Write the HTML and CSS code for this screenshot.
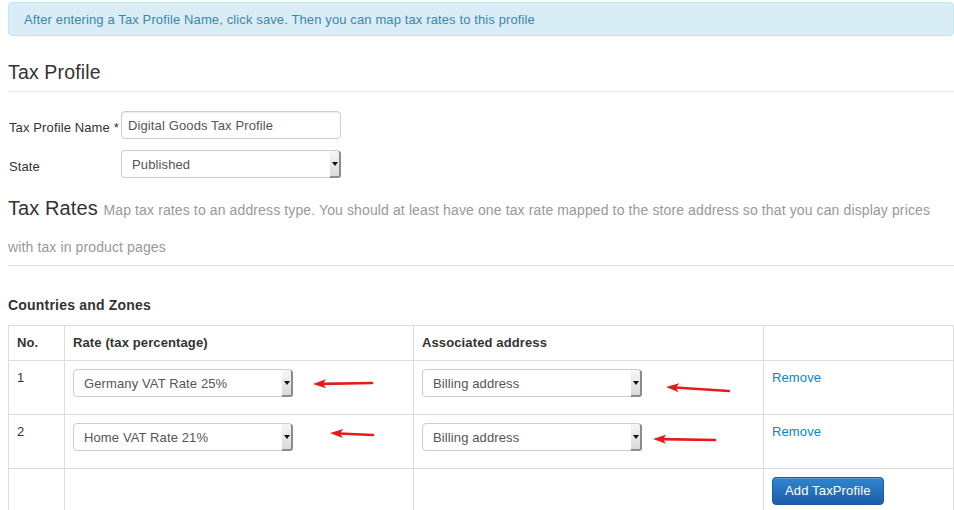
FILE: index.html
```html
<!DOCTYPE html>
<html>
<head>
<meta charset="utf-8">
<title>Tax Profile</title>
<link rel="stylesheet" href="styles.css">
</head>
<body>
<div class="page">
  <div class="alert">After entering a Tax Profile Name, click save. Then you can map tax rates to this profile</div>

  <h3 class="section-title">Tax Profile</h3>
  <hr class="rule rule-profile">

  <div class="form">
    <div class="form-row">
      <label class="control-label">Tax Profile Name *</label>
      <input class="text-input" type="text" value="Digital Goods Tax Profile">
    </div>
    <div class="form-row">
      <label class="control-label">State</label>
      <div class="select"><span class="select-value">Published</span><span class="select-drop"></span></div>
    </div>
  </div>

  <h3 class="rates-title">Tax Rates <small class="muted">Map tax rates to an address type. You should at least have one tax rate mapped to the store address so that you can display prices with tax in product pages</small></h3>
  <hr class="rule rule-rates">

  <h4 class="zones-title">Countries and Zones</h4>

  <table class="rates-table">
    <colgroup>
      <col class="col-no">
      <col class="col-rate">
      <col class="col-addr">
      <col class="col-action">
    </colgroup>
    <thead>
      <tr>
        <th>No.</th>
        <th>Rate (tax percentage)</th>
        <th>Associated address</th>
        <th></th>
      </tr>
    </thead>
    <tbody>
      <tr>
        <td>1</td>
        <td><div class="select cell-select"><span class="select-value">Germany VAT Rate 25%</span><span class="select-drop"></span></div></td>
        <td><div class="select cell-select"><span class="select-value">Billing address</span><span class="select-drop"></span></div></td>
        <td><a class="link" href="#">Remove</a></td>
      </tr>
      <tr>
        <td>2</td>
        <td><div class="select cell-select"><span class="select-value">Home VAT Rate 21%</span><span class="select-drop"></span></div></td>
        <td><div class="select cell-select"><span class="select-value">Billing address</span><span class="select-drop"></span></div></td>
        <td><a class="link" href="#">Remove</a></td>
      </tr>
      <tr>
        <td></td>
        <td></td>
        <td></td>
        <td><button class="btn-primary" type="button">Add TaxProfile</button></td>
      </tr>
    </tbody>
  </table>
</div>

<svg class="annotations" width="954" height="510" viewBox="0 0 954 510" xmlns="http://www.w3.org/2000/svg">
  <defs>
    <g id="arrowhead">
      <path d="M0 0 L13 -4.5 L10 0 L13 4.5 Z" fill="#e31b1b"/>
    </g>
  </defs>
  <g transform="translate(313 384) rotate(-1)">
    <use href="#arrowhead"/>
    <line x1="9" y1="0" x2="59" y2="0" stroke="#e31b1b" stroke-width="2.6" stroke-linecap="round"/>
  </g>
  <g transform="translate(330 433) rotate(2.7)">
    <use href="#arrowhead"/>
    <line x1="9" y1="0" x2="43" y2="0" stroke="#e31b1b" stroke-width="2.6" stroke-linecap="round"/>
  </g>
  <g transform="translate(666 387) rotate(3.6)">
    <use href="#arrowhead"/>
    <line x1="9" y1="0" x2="63" y2="0" stroke="#e31b1b" stroke-width="2.6" stroke-linecap="round"/>
  </g>
  <g transform="translate(653 439) rotate(0.9)">
    <use href="#arrowhead"/>
    <line x1="9" y1="0" x2="62" y2="0" stroke="#e31b1b" stroke-width="2.6" stroke-linecap="round"/>
  </g>
</svg>
</body>
</html>
```

FILE: styles.css
```css
html, body {
  margin: 0;
  padding: 0;
  background: #ffffff;
}

body {
  font-family: "Liberation Sans", Arial, Helvetica, sans-serif;
  font-size: 13px;
  line-height: 18px;
  letter-spacing: 0.12px;
  color: #333333;
  position: relative;
  width: 954px;
  height: 510px;
  overflow: hidden;
}

.page {
  width: 946px;
  padding: 2px 0 0 8px;
}

.alert {
  background: #d9edf7;
  border: 1px solid #bce8f1;
  border-radius: 4px;
  color: #3a87ad;
  padding: 8px 15px 6px;
}

.section-title {
  font-size: 19.5px;
  font-weight: normal;
  line-height: 30px;
  margin: 21px 0 0;
  letter-spacing: 0.15px;
  color: #333333;
}

.rule {
  border: 0;
  border-top: 1px solid #e5e5e5;
  height: 0;
}

.rule-profile {
  margin: 4px 0 19px;
}

.form-row {
  display: flex;
  margin-bottom: 11px;
}

.form-row:last-child {
  margin-bottom: 0;
}

.control-label {
  width: 113px;
  padding: 8px 0 0 1px;
  box-sizing: border-box;
  flex: none;
}

.text-input {
  width: 220px;
  height: 28px;
  box-sizing: border-box;
  border: 1px solid #cccccc;
  border-radius: 4px;
  padding: 0 6px;
  margin: 0;
  font-family: "Liberation Sans", Arial, Helvetica, sans-serif;
  font-size: 13px;
  letter-spacing: 0.12px;
  color: #555555;
  box-shadow: inset 0 1px 1px rgba(0, 0, 0, 0.075);
  outline: none;
}

.select {
  display: flex;
  width: 220px;
  height: 28px;
  box-sizing: border-box;
  border: 1px solid #cccccc;
  border-radius: 4px;
  background: #ffffff;
}

.select-value {
  flex: 1;
  padding: 1px 0 0 10px;
  line-height: 26px;
  color: #555555;
  white-space: nowrap;
}

.select-drop {
  width: 11px;
  box-sizing: border-box;
  border-right: 2px solid #8c8c8c;
  border-bottom: 2px solid #8c8c8c;
  border-radius: 0 3px 3px 0;
  background: linear-gradient(#f6f6f6, #dadada);
  display: flex;
  align-items: center;
  justify-content: center;
  margin-right: -1px;
  margin-bottom: -1px;
}

.select-drop::before {
  content: "";
  width: 0;
  height: 0;
  border-left: 3px solid transparent;
  border-right: 3px solid transparent;
  border-top: 4px solid #111111;
}

.rates-title {
  font-size: 20px;
  font-weight: normal;
  line-height: 35px;
  margin: 13px 0 0;
  letter-spacing: 0.1px;
  color: #333333;
}

.muted {
  font-size: 14px;
  letter-spacing: 0.12px;
  color: #999999;
}

.rule-rates {
  margin: 0 0 29px;
}

.zones-title {
  font-size: 14px;
  font-weight: bold;
  line-height: 20px;
  margin: 0 0 10px;
  letter-spacing: 0.2px;
}

.rates-table {
  width: 946px;
  border-collapse: collapse;
  table-layout: fixed;
  border: 1px solid #dddddd;
}

.col-no { width: 56px; }
.col-rate { width: 349px; }
.col-addr { width: 350px; }

.rates-table th,
.rates-table td {
  border: 1px solid #dddddd;
  padding: 8px;
  text-align: left;
  vertical-align: top;
  line-height: 18px;
}

.rates-table th {
  font-weight: bold;
}

.cell-select {
  margin-bottom: 9px;
}

.link {
  color: #0088cc;
  text-decoration: none;
}

.btn-primary {
  font-family: "Liberation Sans", Arial, Helvetica, sans-serif;
  font-size: 13px;
  line-height: 18px;
  letter-spacing: 0.15px;
  color: #ffffff;
  padding: 4px 12px;
  border: 1px solid #1b5c9e;
  border-radius: 4px;
  background: linear-gradient(#2e86cf, #1d5ea8);
  box-shadow: inset 0 1px 0 rgba(255, 255, 255, 0.2);
  margin: 0;
}

.annotations {
  position: absolute;
  top: 0;
  left: 0;
  pointer-events: none;
}
```
